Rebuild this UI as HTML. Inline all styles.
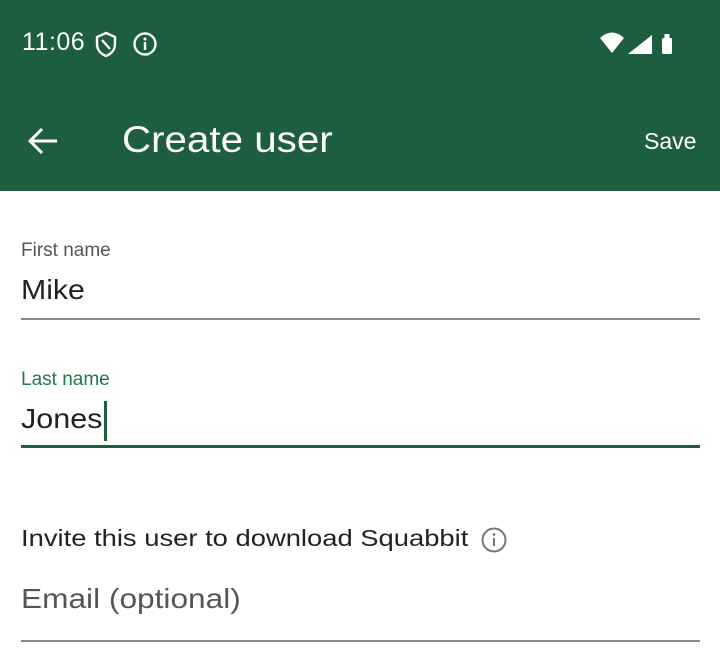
<!DOCTYPE html>
<html><head><style>
body{margin:0;width:720px;height:660px;background:#fff;font-family:"Liberation Sans",sans-serif;position:relative;overflow:hidden}
.bar{position:absolute;left:0;top:0;width:720px;height:191px;background:#1c5e3e;color:#fff}
.t{position:absolute;white-space:nowrap;transform-origin:0 50%}
.line{position:absolute;left:21px;width:679px}
</style></head><body>
<div class="bar">
<div class="t" style="left:22px;top:28px;font-size:25px;letter-spacing:0.5px">11:06</div>
<svg style="position:absolute;left:94px;top:31px" width="24" height="26" viewBox="0 0 24 26"><path d="M12 2L3 6v7c0 6 4 10 9 12c5-2 9-6 9-12V6z" fill="none" stroke="#fff" stroke-width="2.4"/><path d="M8 9l8 9" stroke="#fff" stroke-width="2.4"/></svg>
<svg style="position:absolute;left:132px;top:31px" width="26" height="26" viewBox="0 0 26 26"><circle cx="13" cy="13" r="10.5" fill="none" stroke="#fff" stroke-width="2.4"/><rect x="11.8" y="11" width="2.4" height="8" fill="#fff"/><circle cx="13" cy="8" r="1.5" fill="#fff"/></svg>
<svg style="position:absolute;left:600px;top:30px" width="86" height="26" viewBox="0 0 86 26"><path d="M0 8Q12 -3 24 8L12 23z" fill="#fff"/><path d="M52 5V24H28z" fill="#fff"/><rect x="62" y="8" width="10" height="16" rx="1.5" fill="#fff"/><rect x="64.5" y="4" width="5" height="5" fill="#fff"/></svg>
<svg style="position:absolute;left:26px;top:126px" width="34" height="30" viewBox="0 0 34 30"><path d="M31 15H4M16 3L4 15l12 12" fill="none" stroke="#fff" stroke-width="3"/></svg>
<div class="t" style="left:122px;top:119px;font-size:37px;transform:scaleX(1.09)">Create user</div>
<div class="t" style="left:644px;top:128px;font-size:23px">Save</div>
</div>
<div class="t" style="left:21px;top:240px;font-size:19px;color:#555">First name</div>
<div class="t" style="left:21px;top:274px;font-size:28px;color:#222;transform:scaleX(1.08)">Mike</div>
<div class="line" style="top:318px;height:2px;background:#888"></div>
<div class="t" style="left:21px;top:369px;font-size:19px;color:#1c7a4e">Last name</div>
<div class="t" style="left:21px;top:403px;font-size:28px;color:#222;transform:scaleX(1.09)">Jones</div>
<div style="position:absolute;left:104px;top:401px;width:3px;height:40px;background:#1c5e3e"></div>
<div class="line" style="top:445px;height:3px;background:#1c5e3e"></div>
<div class="t" style="left:21px;top:525px;font-size:23px;color:#222;transform:scaleX(1.19)">Invite this user to download Squabbit</div>
<svg style="position:absolute;left:480px;top:526px" width="28" height="28" viewBox="0 0 28 28"><circle cx="14" cy="14" r="11.5" fill="none" stroke="#777" stroke-width="2"/><rect x="13" y="12" width="2" height="8" fill="#777"/><circle cx="14" cy="8.5" r="1.4" fill="#777"/></svg>
<div class="t" style="left:21px;top:583px;font-size:28px;color:#555;transform:scaleX(1.13)">Email (optional)</div>
<div class="line" style="top:640px;height:2px;background:#888"></div>
</body></html>
